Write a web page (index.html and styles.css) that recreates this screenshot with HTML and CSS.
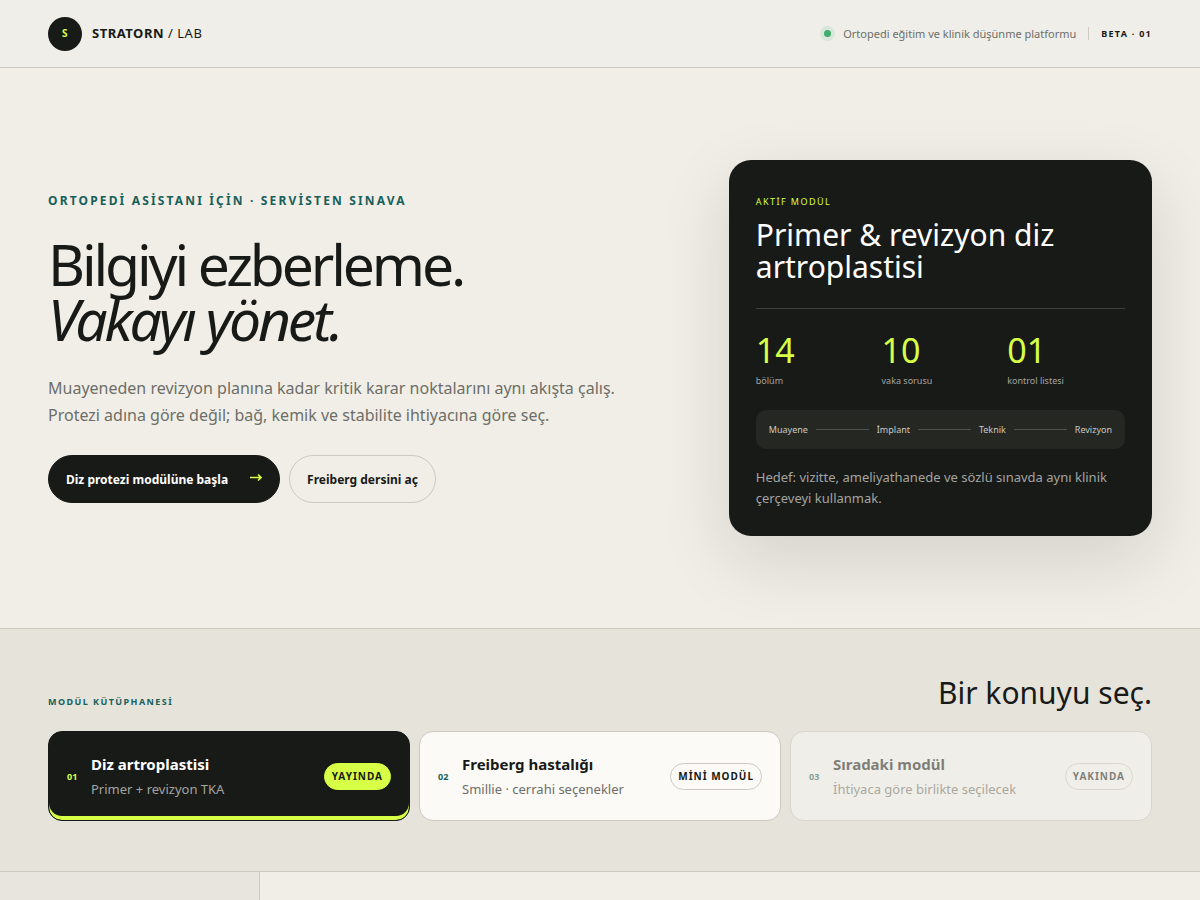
FILE: index.html
```
<!DOCTYPE html>
<html lang="tr">

<head>
    <meta charset="UTF-8">
    <meta name="viewport" content="width=device-width, initial-scale=1.0">
    <title>Stratorn / Lab</title>
    <link rel="stylesheet" href="styles.css">
</head>

<body>
    <header class="topbar">
        <a class="brand" href="#">
            <span class="brand-mark">S</span>
            <span class="brand-name"><strong>STRATORN</strong> / LAB</span>
        </a>
        <div class="topbar-meta">
            <span class="status-dot"></span>
            <span>Ortopedi eğitim ve klinik düşünme platformu</span>
            <span class="version">BETA · 01</span>
        </div>
    </header>

    <section class="hero">
        <div class="hero-copy">
            <p class="eyebrow">ORTOPEDİ ASİSTANI İÇİN · SERVİSTEN SINAVA</p>
            <h1>Bilgiyi ezberleme.<br><em>Vakayı yönet.</em></h1>
            <p class="lead">Muayeneden revizyon planına kadar kritik karar noktalarını aynı akışta çalış. Protezi adına göre değil; bağ, kemik ve stabilite ihtiyacına göre seç.</p>
            <div class="actions">
                <a class="btn btn-dark" href="#diz">Diz protezi modülüne başla
                    <svg class="arrow" width="12" height="12" viewBox="0 0 12 12" aria-hidden="true">
                        <path d="M0 4.5H11M8 1.5L11 4.5L8 7.5" />
                    </svg>
                </a>
                <a class="btn" href="#freiberg">Freiberg dersini aç</a>
            </div>
        </div>

        <aside class="summary">
            <p class="summary-label">AKTİF MODÜL</p>
            <h2>Primer &amp; revizyon diz artroplastisi</h2>
            <div class="stats">
                <div><b>14</b><span>bölüm</span></div>
                <div><b>10</b><span>vaka sorusu</span></div>
                <div><b>01</b><span>kontrol listesi</span></div>
            </div>
            <div class="route">
                <span>Muayene</span><i></i>
                <span>İmplant</span><i></i>
                <span>Teknik</span><i></i>
                <span>Revizyon</span>
            </div>
            <p class="goal">Hedef: vizitte, ameliyathanede ve sözlü sınavda aynı klinik çerçeveyi kullanmak.</p>
        </aside>
    </section>

    <section class="library">
        <div class="library-head">
            <p class="library-label">MODÜL KÜTÜPHANESİ</p>
            <h2>Bir konuyu seç.</h2>
        </div>
        <div class="modules">
            <button class="module active" id="diz" type="button">
                <span class="num">01</span>
                <span class="module-text"><strong>Diz artroplastisi</strong><small>Primer + revizyon TKA</small></span>
                <span class="badge">YAYINDA</span>
            </button>
            <button class="module" id="freiberg" type="button">
                <span class="num">02</span>
                <span class="module-text"><strong>Freiberg hastalığı</strong><small>Smillie · cerrahi seçenekler</small></span>
                <span class="badge">MİNİ MODÜL</span>
            </button>
            <button class="module" type="button" disabled>
                <span class="num">03</span>
                <span class="module-text"><strong>Sıradaki modül</strong><small>İhtiyaca göre birlikte seçilecek</small></span>
                <span class="badge">YAKINDA</span>
            </button>
        </div>
    </section>

    <div class="workspace">
        <nav class="sidebar"></nav>
        <main></main>
    </div>
</body>

</html>
```

FILE: styles.css
```
:root {
    --ink: #181a17;
    --paper: #f1eee7;
    --line: #cbc9c1;
    --muted: #6d6e68;
    --green: #17605a;
    --lime: #d7ff45;
}

* {
    box-sizing: border-box;
}

body {
    display: flex;
    flex-direction: column;
    min-height: 100vh;
    margin: 0;
    background: var(--paper);
    color: var(--ink);
    font-family: "Noto Sans", sans-serif;
}

h1,
h2,
p {
    margin: 0;
    font-weight: 400;
}

a {
    color: inherit;
    text-decoration: none;
}

/* top bar */
.topbar {
    display: flex;
    align-items: center;
    justify-content: space-between;
    min-height: 68px;
    padding: 0 48px;
    background: #efeee9;
    border-bottom: 1px solid var(--line);
}

.brand {
    display: flex;
    align-items: center;
    gap: 10px;
    font-size: 13px;
    line-height: 17px;
    letter-spacing: 0.04em;
}

.brand-mark {
    display: grid;
    place-items: center;
    width: 34px;
    height: 34px;
    border-radius: 50%;
    background: var(--ink);
    color: var(--lime);
    font-size: 10px;
    font-weight: 700;
}

.brand-name strong {
    font-weight: 700;
}

.topbar-meta {
    display: flex;
    align-items: center;
    gap: 12px;
    color: var(--muted);
    font-size: 11px;
}

.status-dot {
    width: 7px;
    height: 7px;
    border-radius: 50%;
    background: #3fab6c;
    box-shadow: 0 0 0 4px #d9e6da;
}

.version {
    padding-left: 12px;
    border-left: 1px solid var(--line);
    color: var(--ink);
    font-size: 9px;
    font-weight: 700;
    letter-spacing: 0.14em;
}

/* hero */
.hero {
    display: grid;
    grid-template-columns: 3fr 2fr;
    align-items: center;
    gap: 46px;
    padding: 92px 48px;
}

.eyebrow {
    color: var(--green);
    font-size: 12px;
    font-weight: 700;
    line-height: 16px;
    letter-spacing: 0.18em;
}

h1 {
    margin: 28px 0;
    font-size: 57px;
    line-height: 55px;
    letter-spacing: -0.055em;
}

.lead {
    max-width: 590px;
    color: var(--muted);
    font-size: 16px;
    line-height: 27px;
}

.actions {
    display: flex;
    flex-wrap: wrap;
    gap: 9px;
    margin-top: 26px;
}

.btn {
    display: flex;
    align-items: center;
    gap: 22px;
    min-height: 48px;
    padding: 0 17px;
    border: 1px solid var(--line);
    border-radius: 24px;
    font-size: 12px;
    font-weight: 700;
}

.btn-dark {
    background: var(--ink);
    border-color: var(--ink);
    color: #fff;
}

.arrow {
    fill: none;
    stroke: var(--lime);
    stroke-width: 1.6;
}

/* summary card */
.summary {
    padding: 35px 27px 27px;
    border-radius: 22px;
    background: var(--ink);
    color: #fff;
    box-shadow: 0 24px 70px rgba(24, 26, 23, 0.13);
}

.summary-label {
    color: var(--lime);
    font-size: 9px;
    line-height: 14px;
    letter-spacing: 0.16em;
}

.summary h2 {
    margin-top: 10px;
    font-size: 30px;
    line-height: 32px;
}

.stats {
    display: grid;
    grid-template-columns: repeat(3, 1fr);
    gap: 8px;
    margin-top: 25px;
    padding: 23px 0 22px;
    border-top: 1px solid #3e403d;
}

.stats b {
    display: block;
    color: var(--lime);
    font-size: 34px;
    font-weight: 400;
    line-height: 36px;
}

.stats span {
    display: block;
    margin-top: 6px;
    color: #a3a4a2;
    font-size: 9px;
    line-height: 14px;
}

.route {
    display: flex;
    align-items: center;
    gap: 8px;
    padding: 12px 13px;
    border-radius: 10px;
    background: #252722;
    color: #c8c9c6;
    font-size: 9px;
    line-height: 15px;
}

.route i {
    flex: 1;
    height: 1px;
    background: #50524d;
}

.goal {
    margin-top: 18px;
    color: #a3a4a2;
    font-size: 13px;
    line-height: 21px;
}

/* module library */
.library {
    padding: 48px 48px 50px;
    border-top: 1px solid var(--line);
    border-bottom: 1px solid var(--line);
    background: #e5e3da;
}

.library-head {
    display: flex;
    align-items: flex-end;
    justify-content: space-between;
    margin-bottom: 22px;
}

.library-label {
    color: var(--green);
    font-size: 9px;
    font-weight: 700;
    line-height: 14px;
    letter-spacing: 0.16em;
}

.library h2 {
    font-size: 30px;
    line-height: 32px;
}

.modules {
    display: grid;
    grid-template-columns: repeat(3, 1fr);
    gap: 9px;
}

.module {
    display: flex;
    align-items: center;
    min-height: 90px;
    padding: 18px;
    border: 1px solid var(--line);
    border-radius: 14px;
    background: #fcfaf6;
    color: var(--ink);
    font-family: inherit;
    text-align: left;
    cursor: pointer;
}

.num {
    width: 24px;
    color: var(--green);
    font-size: 9px;
    font-weight: 700;
}

.module-text {
    flex: 1;
}

.module-text strong,
.module-text small {
    display: block;
}

.module-text strong {
    font-size: 15px;
    font-weight: 700;
    line-height: 24px;
}

.module-text small {
    margin-top: 1px;
    color: var(--muted);
    font-size: 13px;
    line-height: 24px;
}

.badge {
    padding: 5px 7px;
    border: 1px solid var(--line);
    border-radius: 14px;
    font-size: 10px;
    font-weight: 700;
    line-height: 15px;
    letter-spacing: 1px;
}

.module.active {
    background: var(--ink);
    border-color: var(--ink);
    box-shadow: inset 0 -4px 0 var(--lime);
    color: #fff;
}

.active .num {
    color: var(--lime);
}

.active small {
    color: #a3a4a2;
}

.active .badge {
    background: var(--lime);
    border-color: var(--lime);
    color: var(--ink);
}

.module:disabled {
    opacity: 0.5;
    cursor: default;
}

/* lesson area */
.workspace {
    display: grid;
    grid-template-columns: 260px 1fr;
    flex: 1;
}

.sidebar {
    border-right: 1px solid var(--line);
    background: #e8e5de;
}
```
